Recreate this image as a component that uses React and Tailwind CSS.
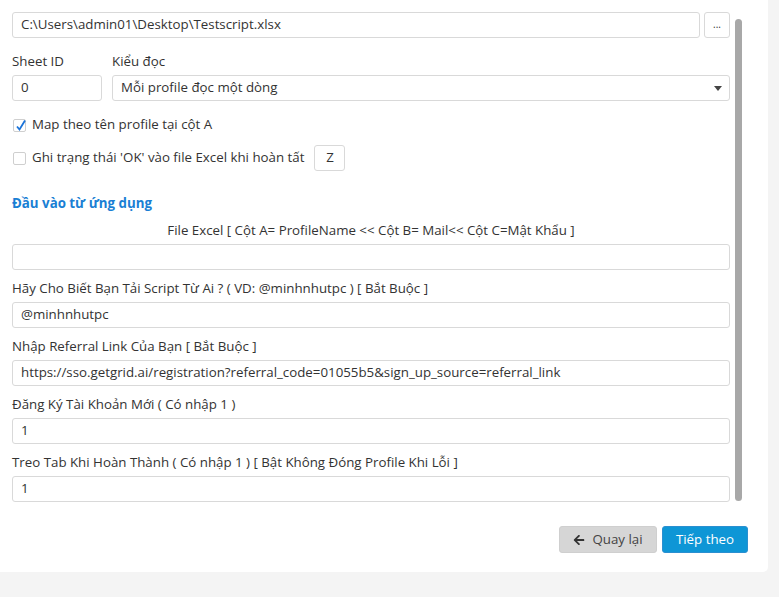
import React from "react";

const font = { fontFamily: '"Open Sans", "Noto Sans", sans-serif' };

function Field({ value, className = "" }) {
  return (
    <div className={"h-[26px] border border-[#d9d9d9] rounded-[3px] bg-white flex items-center px-[8px] text-[13.3px] text-[#333] " + className}>
      {value}
    </div>
  );
}

function Check({ checked }) {
  return (
    <div className="w-[13px] h-[13px] border border-[#cfcfcf] rounded-[2px] bg-white relative shrink-0">
      {checked && (
        <svg className="absolute left-[1px] top-[-1px]" width="12" height="13" viewBox="0 0 12 13">
          <path d="M2 7.5 L4.5 10.5 L10 1.5" fill="none" stroke="#1a73d9" strokeWidth="1.8" />
        </svg>
      )}
    </div>
  );
}

export default function App() {
  return (
    <div className="w-[779px] h-[597px] bg-[#f4f4f4] overflow-hidden" style={font}>
      <div className="w-[768px] h-[572px] bg-white rounded-br-[5px] flex flex-col">
        <div className="flex h-[505px]">
          <div className="w-[730px] pl-[12px] pt-[12px] text-[13.3px] text-[#333]">
            <div className="flex gap-[4px]">
              <Field value="C:\Users\admin01\Desktop\Testscript.xlsx" className="flex-1" />
              <div className="w-[26px] h-[26px] border border-[#d9d9d9] rounded-[3px] flex items-center justify-center text-[10px] leading-none pb-[2px]">...</div>
            </div>

            <div className="flex gap-[10px] mt-[14px]">
              <div className="w-[90px]">
                <div className="h-[18px] leading-[18px] mb-[5px]">Sheet ID</div>
                <Field value="0" />
              </div>
              <div className="flex-1">
                <div className="h-[18px] leading-[18px] mb-[5px]">Kiểu đọc</div>
                <Field
                  className="justify-between"
                  value={
                    <>
                      <span>Mỗi profile đọc một dòng</span>
                      <svg width="8" height="5" viewBox="0 0 8 5" className="mr-[-1px]">
                        <path d="M0 0 L8 0 L4 5 Z" fill="#444" />
                      </svg>
                    </>
                  }
                />
              </div>
            </div>

            <div className="flex items-center gap-[6px] mt-[14px] h-[20px] pl-[1px]">
              <Check checked />
              <span>Map theo tên profile tại cột A</span>
            </div>

            <div className="flex items-center gap-[6px] mt-[10px] pl-[1px]">
              <Check />
              <span>Ghi trạng thái 'OK' vào file Excel khi hoàn tất</span>
              <Field value="Z" className="w-[31px] h-[25px] ml-[4px] justify-center px-0" />
            </div>

            <div className="mt-[23px] h-[18px] leading-[18px] font-bold text-[#1a7fd4]">Đầu vào từ ứng dụng</div>

            <div className="mt-[9px] h-[18px] leading-[18px] text-center">
              File Excel [ Cột A= ProfileName &lt;&lt; Cột B= Mail&lt;&lt; Cột C=Mật Khẩu ]
            </div>
            <Field value="" className="mt-[5px]" />

            <div className="mt-[9px] h-[18px] leading-[18px]">Hãy Cho Biết Bạn Tải Script Từ Ai ? ( VD: @minhnhutpc ) [ Bắt Buộc ]</div>
            <Field value="@minhnhutpc" className="mt-[5px]" />

            <div className="mt-[9px] h-[18px] leading-[18px]">Nhập Referral Link Của Bạn [ Bắt Buộc ]</div>
            <Field value="https://sso.getgrid.ai/registration?referral_code=01055b5&sign_up_source=referral_link" className="mt-[5px]" />

            <div className="mt-[9px] h-[18px] leading-[18px]">Đăng Ký Tài Khoản Mới ( Có nhập 1 )</div>
            <Field value="1" className="mt-[5px]" />

            <div className="mt-[9px] h-[18px] leading-[18px]">Treo Tab Khi Hoàn Thành ( Có nhập 1 ) [ Bật Không Đóng Profile Khi Lỗi ]</div>
            <Field value="1" className="mt-[5px]" />
          </div>
          <div className="ml-[5px] mt-[19px] w-[7px] h-[482px] rounded-full bg-[#a8a8a8]" />
        </div>

        <div className="flex justify-end gap-[5px] pr-[20px] mt-[21px]">
          <div className="h-[27px] w-[98px] rounded-[3px] bg-[#d6d6d6] border border-[#cfcfcf] flex items-center justify-center gap-[7px] text-[13.3px] text-[#444]">
            <svg width="12" height="12" viewBox="0 0 448 512">
              <path fill="#333" d="M257.5 445.1l-22.2 22.2c-9.4 9.4-24.6 9.4-33.9 0L7 273c-9.4-9.4-9.4-24.6 0-33.9L201.4 44.7c9.4-9.4 24.6-9.4 33.9 0l22.2 22.2c9.5 9.5 9.300 25-.4 34.3L136.6 216H424c13.3 0 24 10.7 24 24v32c0 13.3-10.700 24-24 24H136.6l120.5 114.8c9.8 9.3 10 24.8.4 34.3z" />
            </svg>
            <span>Quay lại</span>
          </div>
          <div className="h-[27px] w-[86px] rounded-[3px] bg-[#0e96d6] border border-[#2b8fd0] flex items-center justify-center text-[13.3px] text-white">
            Tiếp theo
          </div>
        </div>
      </div>
    </div>
  );
}
